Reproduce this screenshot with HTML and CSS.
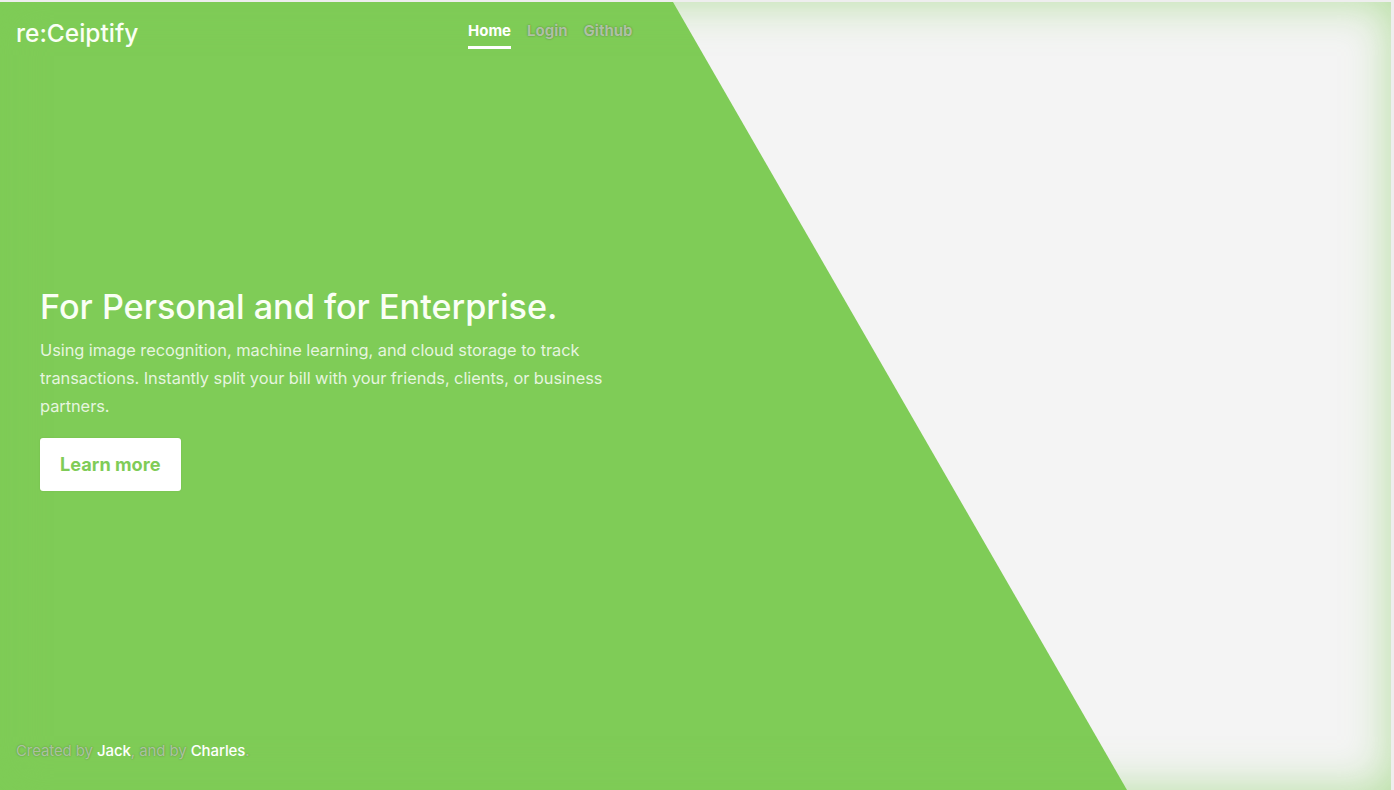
FILE: index.html
```html
<!DOCTYPE html>
<html lang="en">
<head>
<meta charset="utf-8">
<title>re:Ceiptify</title>
<link rel="stylesheet" href="styles.css">
</head>
<body>
<div class="page">
  <div class="panel"></div>
  <div class="glow"></div>
  <header class="topbar">
    <div class="brand">re:Ceiptify</div>
    <nav class="nav">
      <a class="nav-link active">Home</a>
      <a class="nav-link">Login</a>
      <a class="nav-link">Github</a>
    </nav>
  </header>
  <main class="hero">
    <h1 class="title">For Personal and for Enterprise.</h1>
    <p class="lead">Using image recognition, machine learning, and cloud storage to track transactions. Instantly split your bill with your friends, clients, or business partners.</p>
    <a class="btn">Learn more</a>
  </main>
  <footer class="footer">Created by <a class="who">Jack</a>, and by <a class="who">Charles</a>.</footer>
</div>
</body>
</html>
```
FILE: styles.css
```css
html, body {
  margin: 0;
  padding: 0;
}
body {
  background: #eeeeee;
  font-family: Inter, "Liberation Sans", sans-serif;
}
.page {
  position: relative;
  width: 1391px;
  height: 788px;
  margin-top: 2px;
  background: #7fcc57;
  overflow: hidden;
  display: flex;
  flex-direction: column;
}
.panel {
  position: absolute;
  inset: 0;
  background: #f4f4f4;
  clip-path: polygon(673px 0, 100% 0, 100% 100%, 1127px 100%);
}
.glow {
  position: absolute;
  inset: 0;
  box-shadow: inset 0 0 45px rgba(126, 204, 86, 0.55);
  pointer-events: none;
}
.topbar {
  position: relative;
  display: flex;
  align-items: flex-start;
  padding: 16px 0 0 16px;
  height: 41px;
}
.brand {
  color: #fafff5;
  font-size: 24.5px;
  font-weight: 500;
  width: 452px;
  line-height: 30px;
}
.nav {
  display: flex;
  gap: 16px;
  padding-top: 4px;
}
.nav-link {
  font-size: 15px;
  font-weight: 700;
  color: rgba(190, 200, 185, 0.85);
  text-shadow: 0 0 2px rgba(0, 0, 0, 0.35);
  padding-bottom: 6px;
  border-bottom: 3px solid transparent;
  line-height: 18px;
}
.nav-link.active {
  color: #ffffff;
  text-shadow: none;
  border-bottom-color: #ffffff;
}
.hero {
  position: relative;
  padding: 226px 0 0 40px;
  flex: 1;
}
.title {
  margin: 0;
  color: #fafff5;
  font-size: 34.2px;
  font-weight: 500;
  line-height: 44px;
}
.lead {
  margin: 7px 0 18px;
  width: 580px;
  color: rgba(255, 255, 255, 0.82);
  font-size: 16.4px;
  letter-spacing: -0.05px;
  line-height: 28px;
}
.btn {
  display: inline-block;
  background: #ffffff;
  color: #7fcc57;
  font-size: 18.2px;
  font-weight: 700;
  border-radius: 3px;
  padding: 16px 20px 17px;
  line-height: 20px;
  box-shadow: 0 0 2px rgba(0,0,0,0.1);
}
.footer {
  position: relative;
  padding: 0 0 30px 16px;
  font-size: 15px;
  letter-spacing: -0.1px;
  color: rgba(190, 200, 185, 0.8);
  text-shadow: 0 0 2px rgba(0, 0, 0, 0.3);
}
.who {
  color: #ffffff;
  font-weight: 500;
  text-shadow: none;
}
```
